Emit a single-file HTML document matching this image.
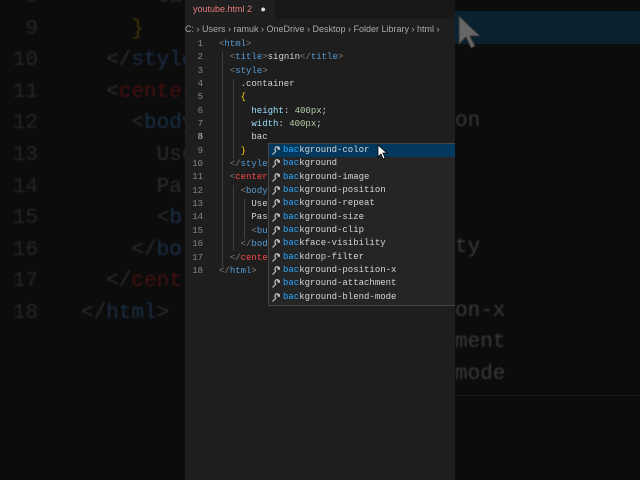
<!DOCTYPE html>
<html><head><meta charset="utf-8"><style>
*{margin:0;padding:0;box-sizing:border-box}
body{width:640px;height:480px;background:#0c0c0c;overflow:hidden;position:relative;font-family:"Liberation Mono",monospace}
.bg{position:absolute;font-size:21px;white-space:pre;filter:blur(0.8px);line-height:31.6px}
.ln{position:absolute;left:0;width:38px;text-align:right;color:#262626}
.panel{position:absolute;left:185px;top:0;width:270px;height:480px;background:#1e1e1e;overflow:hidden}
.tabbar{position:absolute;left:0;top:0;width:270px;height:19px;background:#181818}
.tab{position:absolute;left:0;top:0;width:90px;height:19px;background:#1f1f1f;font-family:"Liberation Sans",sans-serif;font-size:9px;color:#e27b7b;line-height:18px;padding-left:8px}
.crumb{position:absolute;left:0;top:22px;font-family:"Liberation Sans",sans-serif;font-size:9px;color:#aaa;white-space:nowrap;line-height:14px}
.code{position:absolute;left:0;top:38px;font-size:9px;line-height:13.35px;color:#d4d4d4}
.code div{height:13.35px;white-space:pre}
.n{display:inline-block;width:18px;text-align:right;color:#858585;margin-right:16px}
.g{color:#808080}.t{color:#569cd6}.r{color:#f44747}.p{color:#9cdcfe}.v{color:#b5cea8}.y{color:#ffd700}
.guide{position:absolute;width:1px;background:#404040}
.sug{position:absolute;left:83px;top:143px;width:200px;height:163px;background:#252526;border:1px solid #454545}
.sug div{height:13.35px;line-height:13.35px;font-size:9px;color:#d4d4d4;padding-left:14px;position:relative;white-space:pre}
.sug div b{font-weight:normal;color:#2aaaff}
.sug div.sel{background:#04395e}
.sug div svg{position:absolute;left:2px;top:2px}
</style></head><body>
<div class="ln" style="top:-18px;line-height:31.6px;font-size:21px;filter:blur(.8px)">8<br>9<br>10<br>11<br>12<br>13<br>14<br>15<br>16<br>17<br>18</div>
<div class="bg" style="left:81px;top:-18px;color:#2c2c2c">      ta
    <span style="color:#433608">}</span>
  &lt;/<span style="color:#1b2f47">style</span>
  &lt;<span style="color:#461010">center</span>
    &lt;<span style="color:#1b2f47">body</span>
      Use
      Pa
      &lt;<span style="color:#1b2f47">b</span>
    &lt;/<span style="color:#1b2f47">bo</span>
  &lt;/<span style="color:#461010">cent</span>
&lt;/<span style="color:#1b2f47">html</span>&gt;</div>
<div style="position:absolute;left:455px;top:11px;width:185px;height:33px;background:#0a2230"></div>
<svg style="position:absolute;left:457px;top:14px" width="26" height="36" viewBox="0 0 26 36"><path d="M2 2 L2 30 L9 23 L14 34 L18 32 L13 22 L23 22 Z" fill="#666" stroke="#333"/></svg>
<div class="bg" style="left:455px;top:106px;color:#3a3a3a">on</div>
<div class="bg" style="left:455px;top:232px;color:#3a3a3a">ty</div>
<div class="bg" style="left:455px;top:296px;color:#3a3a3a">on-x</div>
<div class="bg" style="left:455px;top:327px;color:#3a3a3a">ment</div>
<div class="bg" style="left:455px;top:359px;color:#3a3a3a">mode</div>
<div style="position:absolute;left:455px;top:395px;width:185px;height:1px;background:#1c1c1c"></div>

<div class="panel">
 <div class="tabbar"></div>
 <div class="tab">youtube.html 2 <span style="color:#ddd;font-size:9px;margin-left:6px">●</span></div>
 <div class="crumb">C: › Users › ramuk › OneDrive › Desktop › Folder Library › html ›</div>
 <div class="guide" style="left:37px;top:52px;height:215px"></div>
 <div class="guide" style="left:48px;top:79px;height:80px"></div>
 <div class="guide" style="left:48px;top:185px;height:66px"></div>
 <div class="guide" style="left:59px;top:199px;height:40px"></div>
 <div class="code"><div><span class="n">1</span><span class="g">&lt;</span><span class="t">html</span><span class="g">&gt;</span></div><div><span class="n">2</span>  <span class="g">&lt;</span><span class="t">title</span><span class="g">&gt;</span>signin<span class="g">&lt;/</span><span class="t">title</span><span class="g">&gt;</span></div><div><span class="n">3</span>  <span class="g">&lt;</span><span class="t">style</span><span class="g">&gt;</span></div><div><span class="n">4</span>    .container</div><div><span class="n">5</span>    <span class="y">{</span></div><div><span class="n">6</span>      <span class="p">height</span>: <span class="v">400px</span>;</div><div><span class="n">7</span>      <span class="p">width</span>: <span class="v">400px</span>;</div><div><span class="n" style="color:#c6c6c6">8</span>      bac</div><div><span class="n">9</span>    <span class="y">}</span></div><div><span class="n">10</span>  <span class="g">&lt;/</span><span class="t">style</span></div><div><span class="n">11</span>  <span class="g">&lt;</span><span class="r">center</span></div><div><span class="n">12</span>    <span class="g">&lt;</span><span class="t">body</span></div><div><span class="n">13</span>      Use</div><div><span class="n">14</span>      Pas</div><div><span class="n">15</span>      <span class="g">&lt;</span><span class="t">bu</span></div><div><span class="n">16</span>    <span class="g">&lt;/</span><span class="t">bod</span></div><div><span class="n">17</span>  <span class="g">&lt;/</span><span class="r">cente</span></div><div><span class="n">18</span><span class="g">&lt;/</span><span class="t">html</span><span class="g">&gt;</span></div></div>
 <div class="sug">
  <div class="sel"><svg width="10" height="10" viewBox="0 0 10 10"><path d="M1.5 8.5 L5 5 M5 5 A2.3 2.3 0 1 1 8.5 3.2 L7 3 L6.8 1.5" stroke="#ccc" fill="none" stroke-width="1.1"/></svg><b>bac</b>kground-color</div>
  <div><svg width="10" height="10" viewBox="0 0 10 10"><path d="M1.5 8.5 L5 5 M5 5 A2.3 2.3 0 1 1 8.5 3.2 L7 3 L6.8 1.5" stroke="#ccc" fill="none" stroke-width="1.1"/></svg><b>bac</b>kground</div>
  <div><svg width="10" height="10" viewBox="0 0 10 10"><path d="M1.5 8.5 L5 5 M5 5 A2.3 2.3 0 1 1 8.5 3.2 L7 3 L6.8 1.5" stroke="#ccc" fill="none" stroke-width="1.1"/></svg><b>bac</b>kground-image</div>
  <div><svg width="10" height="10" viewBox="0 0 10 10"><path d="M1.5 8.5 L5 5 M5 5 A2.3 2.3 0 1 1 8.5 3.2 L7 3 L6.8 1.5" stroke="#ccc" fill="none" stroke-width="1.1"/></svg><b>bac</b>kground-position</div>
  <div><svg width="10" height="10" viewBox="0 0 10 10"><path d="M1.5 8.5 L5 5 M5 5 A2.3 2.3 0 1 1 8.5 3.2 L7 3 L6.8 1.5" stroke="#ccc" fill="none" stroke-width="1.1"/></svg><b>bac</b>kground-repeat</div>
  <div><svg width="10" height="10" viewBox="0 0 10 10"><path d="M1.5 8.5 L5 5 M5 5 A2.3 2.3 0 1 1 8.5 3.2 L7 3 L6.8 1.5" stroke="#ccc" fill="none" stroke-width="1.1"/></svg><b>bac</b>kground-size</div>
  <div><svg width="10" height="10" viewBox="0 0 10 10"><path d="M1.5 8.5 L5 5 M5 5 A2.3 2.3 0 1 1 8.5 3.2 L7 3 L6.8 1.5" stroke="#ccc" fill="none" stroke-width="1.1"/></svg><b>bac</b>kground-clip</div>
  <div><svg width="10" height="10" viewBox="0 0 10 10"><path d="M1.5 8.5 L5 5 M5 5 A2.3 2.3 0 1 1 8.5 3.2 L7 3 L6.8 1.5" stroke="#ccc" fill="none" stroke-width="1.1"/></svg><b>bac</b>kface-visibility</div>
  <div><svg width="10" height="10" viewBox="0 0 10 10"><path d="M1.5 8.5 L5 5 M5 5 A2.3 2.3 0 1 1 8.5 3.2 L7 3 L6.8 1.5" stroke="#ccc" fill="none" stroke-width="1.1"/></svg><b>bac</b>kdrop-filter</div>
  <div><svg width="10" height="10" viewBox="0 0 10 10"><path d="M1.5 8.5 L5 5 M5 5 A2.3 2.3 0 1 1 8.5 3.2 L7 3 L6.8 1.5" stroke="#ccc" fill="none" stroke-width="1.1"/></svg><b>bac</b>kground-position-x</div>
  <div><svg width="10" height="10" viewBox="0 0 10 10"><path d="M1.5 8.5 L5 5 M5 5 A2.3 2.3 0 1 1 8.5 3.2 L7 3 L6.8 1.5" stroke="#ccc" fill="none" stroke-width="1.1"/></svg><b>bac</b>kground-attachment</div>
  <div><svg width="10" height="10" viewBox="0 0 10 10"><path d="M1.5 8.5 L5 5 M5 5 A2.3 2.3 0 1 1 8.5 3.2 L7 3 L6.8 1.5" stroke="#ccc" fill="none" stroke-width="1.1"/></svg><b>bac</b>kground-blend-mode</div>
 </div>
 <svg style="position:absolute;left:192px;top:144px" width="12" height="16" viewBox="0 0 12 16"><path d="M1 1 L1 13 L4 10 L6 15 L8 14 L6 9 L10 9 Z" fill="#fff" stroke="#000" stroke-width=".8"/></svg>
</div>
</body></html>
